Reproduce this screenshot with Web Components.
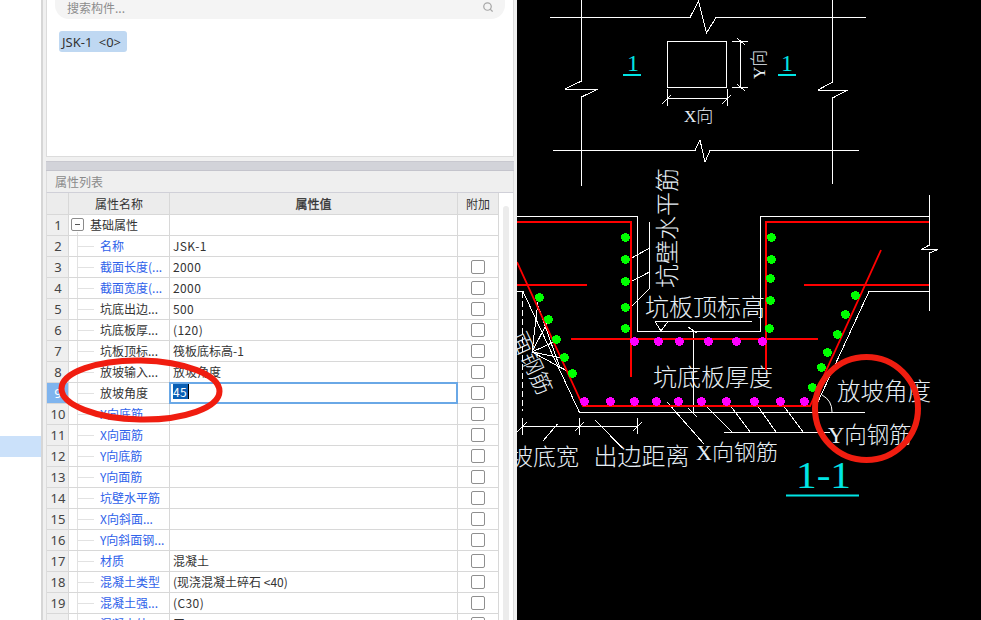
<!DOCTYPE html>
<html lang="zh"><head><meta charset="utf-8"><title>属性列表</title>
<style>
html,body{margin:0;padding:0;background:#fff;height:620px;overflow:hidden}
body{font-family:"Noto Sans CJK SC","Noto Sans",sans-serif}
</style></head><body>
<app-shell>
  <left-gutter slot="gutter"></left-gutter>
  <side-panel slot="panel">
    <search-box slot="search" placeholder="搜索构件..."></search-box>
    <tag-chip slot="tags">JSK-1 &lt;0&gt;</tag-chip>
    <prop-table slot="table"></prop-table>
  </side-panel>
  <cad-drawing slot="canvas"></cad-drawing>
</app-shell>
<script>
function define(name, css, html, extra){
  class E extends HTMLElement{
    constructor(){super();this.attachShadow({mode:'open'}).innerHTML='<style>'+css+'</style>'+html;}
    connectedCallback(){ if(extra) extra.call(this); }
  }
  customElements.define(name,E);
}
define('app-shell',`:host{display:flex;width:981px;height:620px;overflow:hidden}
 .g{flex:0 0 41px}.p{flex:0 0 476px}.c{flex:0 0 464px}`,
 `<div class="g"><slot name="gutter"></slot></div><div class="p"><slot name="panel"></slot></div><div class="c"><slot name="canvas"></slot></div>`);

define('left-gutter',`:host{display:block;height:620px;padding-top:436px;box-sizing:border-box;background:#fff}
 div{height:21px;background:#cbe1fa}`,`<div></div>`);

define('side-panel',`:host{display:flex;flex-direction:column;height:620px;box-sizing:border-box;background:#f0f0f0;
   border-left:2px solid #d6d6d6;padding:0 3px 0 3px}
 .top{height:157px;box-sizing:border-box;background:#fff;border:1px solid #dcdcdc;border-top:0;padding:0 8px;flex:none}
 .tags{display:flex;padding:12px 4px 0}
 .grip{flex:none;height:10px;margin-top:4px;box-sizing:border-box;background:#d2d3d9;border-top:1px solid #c8c8cf;border-bottom:1px solid #c4c4cc}
 .title{flex:none;height:22px;box-sizing:border-box;padding:0 8px 1px;display:flex;align-items:center;font-size:12px;color:#8a8a8a;background:#efefef;border-left:1px solid #dcdcdc;border-right:1px solid #dcdcdc;border-bottom:1px solid #d0d0d8}
 .tbl{flex:1;min-height:0}`,
 `<div class="top"><slot name="search"></slot><div class="tags"><slot name="tags"></slot></div></div>
  <div class="grip"></div><div class="title">属性列表</div><div class="tbl"><slot name="table"></slot></div>`);

define('search-box',`:host{display:flex;align-items:center;justify-content:space-between;height:20px;box-sizing:border-box;margin-top:-1px;padding:0 12px 4px;
   background:#f4f4f4;border-radius:0 0 14px 14px;font-size:12px;color:#8c8c8c}
 svg{width:10px;height:10px;display:block}`,
 `<span id="t"></span><svg viewBox="0 0 12 12" fill="none" stroke="#a8a8a8" stroke-width="1.5"><circle cx="5.4" cy="5.4" r="4.5"/><path d="M8.6 8.6 11.5 11.5"/></svg>`,
 function(){this.shadowRoot.getElementById('t').textContent=this.getAttribute('placeholder');});

define('tag-chip',`:host{display:inline-flex;align-items:center;height:21px;box-sizing:border-box;padding:0 3px;width:68px;white-space:pre;
   background:#bfd8f2;border-radius:3px;font:13px "Noto Sans","Noto Sans CJK SC",sans-serif;color:#333;word-spacing:3px}`,`<slot></slot>`);

define('prop-row',`:host{display:grid;grid-template-columns:22px 101px 288px 41px;height:21px;box-sizing:border-box;font-size:12px;line-height:20px;color:#333}
 div{box-sizing:border-box;border-bottom:1px solid #d8d8d8;border-right:1px solid #d8d8d8;height:21px;overflow:hidden;white-space:nowrap;position:relative}
 .n{background:#efefef;text-align:center;padding-left:1px;color:#444;font-size:13px;font-family:"Noto Sans",sans-serif}
 .name{padding-left:31px;border-right:1px solid #d8d8d8}
 .name::before{content:"";position:absolute;left:8px;top:0;bottom:0;border-left:1px solid #e2e2e2}
 .name::after{content:"";position:absolute;left:9px;top:10px;width:16px;border-top:1px solid #e2e2e2}
 :host([group]) .name{padding-left:21px}
 :host([group]) .name::after{display:none}
 :host([group]) .name::before{top:17px}
 :host([link]) .name{color:#2f62ea}
 .val{padding-left:3px}
 .box{position:absolute;left:2px;top:3px;width:11px;height:11px;border:1px solid #8b8b8b;border-radius:2px;background:#fff;display:none}
 .box::after{content:"";position:absolute;left:3px;top:5px;width:5px;border-top:1px solid #555}
 :host([group]) .box{display:block}
 .add{display:flex;align-items:center;justify-content:center}
 .add i{display:block;width:14px;height:14px;box-sizing:border-box;border:1px solid #8f8f8f;border-radius:2px;background:#fff}
 :host([group]) .add i,:host([noadd]) .add i{display:none}
 :host([selected]) .n{background:#7fb4ee;color:#fff}
 :host([selected]) .val{border:2px solid #6aa8e6;padding:0 0 0 2px;margin:-1px 0 0 -1px;height:22px;line-height:18px;width:calc(100% + 1px)}
 .sel{background:#0a5fb4;color:#fff;padding-right:1px;display:inline-block;line-height:15px;vertical-align:1px;border-right:1px solid #000}`,
 `<div class="n" id="n"></div><div class="name"><span class="box"></span><span id="a"></span></div><div class="val" id="v"></div><div class="add"><i></i></div>`,
 function(){const r=this.shadowRoot;
   r.getElementById('n').textContent=this.getAttribute('n');
   r.getElementById('a').textContent=this.getAttribute('name');
   const v=r.getElementById('v'), val=this.getAttribute('val')||'';
   if(/^[\x00-\x7f]+$/.test(val)) v.style.letterSpacing='.4px';
   if(this.hasAttribute('selected')){const s=document.createElement('span');s.className='sel';s.textContent=val;v.append(s);}
   else v.textContent=val;
 });

define('prop-table',`:host{display:block;position:relative;height:427px;overflow:hidden;background:#fff;box-sizing:border-box;border-left:1px solid #dcdcdc;border-right:1px solid #dcdcdc}
 .head{display:grid;grid-template-columns:22px 101px 288px 41px;height:22px;box-sizing:border-box}
 .head div{box-sizing:border-box;background:#ececec;border-bottom:1px solid #d8d8d8;border-right:1px solid #d8d8d8;text-align:center;font-size:12px;line-height:21px;color:#333}
 .head .v{-webkit-text-stroke:.3px #333}
 .track{position:absolute;left:456px;top:13px;width:6px;bottom:0;background:#ececec;border-radius:3px 3px 0 0}
 .oval{position:absolute;left:11px;top:164px;width:165px;height:66px;pointer-events:none}`,
 `<div class="head"><div></div><div>属性名称</div><div class="v">属性值</div><div>附加</div></div>
  <div id="rows"></div><div class="track"></div>
  <svg class="oval" viewBox="0 0 165 66" fill="none"><ellipse cx="82.5" cy="33" rx="79" ry="29.5" transform="rotate(1 82 33)" stroke="#f01d10" stroke-width="6"/></svg>`,
 function(){
   const rows=[['1','基础属性','',0,'group'],['2','名称','JSK-1',1,'noadd'],['3','截面长度(...','2000',1],['4','截面宽度(...','2000',1],
   ['5','坑底出边...','500',0],['6','坑底板厚...','(120)',0],['7','坑板顶标...','筏板底标高-1',0],['8','放坡输入...','放坡角度',0],['9','放坡角度','45',0,'selected'],
   ['10','X向底筋','',1],['11','X向面筋','',1],['12','Y向底筋','',1],['13','Y向面筋','',1],['14','坑壁水平筋','',1],['15','X向斜面...','',1],['16','Y向斜面钢...','',1],
   ['17','材质','混凝土',1],['18','混凝土类型','(现浇混凝土碎石 <40)',1],['19','混凝土强...','(C30)',1],['20','混凝土外...','无',1]];
   const host=this.shadowRoot.getElementById('rows');
   rows.forEach(r=>{const e=document.createElement('prop-row');
     e.setAttribute('n',r[0]);e.setAttribute('name',r[1]);e.setAttribute('val',r[2]);
     if(r[3])e.setAttribute('link','');if(r[4])e.setAttribute(r[4],'');host.append(e);});
 });

define('cad-drawing',`:host{display:block;width:464px;height:620px;background:#000;overflow:hidden}
 svg{display:block}
 .w{stroke:#fff;stroke-width:1;fill:none;shape-rendering:crispEdges}
 .r{stroke:#f00;stroke-width:2;fill:none;shape-rendering:crispEdges}
 .r2{stroke:#f00;stroke-width:1.8;fill:none}
 .g{fill:#0f0;shape-rendering:crispEdges}.m{fill:#f0f;shape-rendering:crispEdges}
 text{fill:#e6eef5;font-family:"Liberation Serif","Noto Sans CJK SC",serif;font-weight:300}
 .c{fill:#00e5e5;font-family:"Liberation Serif",serif;font-weight:400}`,
 `<svg width="464" height="620" viewBox="517 0 464 620">
  <text x="684" y="122" font-size="17">X向</text>
  <text transform="translate(765 79) rotate(-90)" font-size="17">Y向</text>
  <text class="c" x="627" y="71" font-size="24">1</text><text class="c" x="781" y="71" font-size="24">1</text>
  <path d="M623 75H641M778 75H796" stroke="#00e5e5" stroke-width="2"/>
  <text transform="translate(676 288) rotate(-90)" font-size="24">坑壁水平筋</text>
  <text x="645" y="316" font-size="24">坑板顶标高</text>
  <text x="653" y="386" font-size="24">坑底板厚度</text>
  <text x="837" y="400" font-size="23.5">放坡角度</text>
  <text x="828" y="443" font-size="22.5">Y向钢筋</text>
  <text x="487" y="465" font-size="23">放坡底宽</text>
  <text x="593.5" y="465" font-size="24">出边距离</text>
  <text x="696" y="460" font-size="22">X向钢筋</text>
  <text transform="translate(511 336.5) rotate(65)" font-size="22">面钢筋</text>
  <text class="c" x="796" y="488" font-size="38" textLength="55" lengthAdjust="spacingAndGlyphs">1-1</text>
  <path d="M786 495.5H859" stroke="#00e5e5" stroke-width="2"/>
  <g class="w">
   <path d="M550 17.5H690L698.5 1 706.5 33 716 17.5H866"/>
   <path d="M553 150.5H695L700 140 705 162 710 150.5H859"/>
   <path d="M581.5 0V81L565 89H598L581.5 97V186"/>
   <path d="M832.5 0V82L818 90H848L832.5 98V184"/>
   <rect x="667.5" y="41.5" width="59" height="46"/>
   <path d="M732 41.5H748M732 87.5H748M740.5 41.5V87.5M737 38 745 45M737 84 745 91"/>
   <path d="M667.5 89V106M727.5 89V106M667.5 98.5H727.5M662 104 671 95M722 104 731 95"/>
   <path d="M517 216.5H637.5V331.5H760.5V216.5H929.5"/>
   <path d="M929.5 195V245L921 249.5H938L929.5 253V311"/>
   <path d="M649.5 222V288.5L630 308M649.5 248 630 259M649.5 272 630 282"/>
   <path d="M655 321.5H752M655 321.5 661 331 668 321.5"/>
   <path d="M693.5 332V413M688 327 697 333M688 408 697 417"/>
   <path d="M517 291.5H523L579.5 412.5H865"/>
   <path d="M813 412.5 869 291.5H929"/>
   <path d="M532 352 538 302M532 352 547 323M532 352 554 342M532 352 562 358M532 352 569 372M537 303 560 368"/>
   <path d="M522.5 292V411" stroke-dasharray="6 3"/>
   <path d="M522 426.5H638M522.5 418V435M579.5 418V435M637.5 418V434M517 432 527 422M575 431 584 422M633 431 642 422"/>
   <path d="M557.5 424 543 441M595 420 622.5 448"/>
   <path d="M667 402 704 444M704 404 732 432M730 405 750 432M757 405 776 432M783 405 803 432M724 432.5H830"/>
   <path d="M832 412A19 19 0 0 0 822 395" shape-rendering="auto"/>
  </g>
  <path class="r" d="M517 222H631V377M929 222H766V370M517 285H587M804 285H929M571 339H818"/>
  <path class="r2" d="M517 262 583 406H810L881 250"/>
  <g class="g">
   <circle cx="625.5" cy="237.5" r="4.5"/><circle cx="625.5" cy="259.5" r="4.5"/><circle cx="625.5" cy="281.5" r="4.5"/><circle cx="625.5" cy="307.5" r="4.5"/><circle cx="625.5" cy="328.5" r="4.5"/>
   <circle cx="771.5" cy="237.5" r="4.5"/><circle cx="771.5" cy="259.5" r="4.5"/><circle cx="770.5" cy="278.5" r="4.5"/><circle cx="770.5" cy="300.5" r="4.5"/><circle cx="769.5" cy="328.5" r="4.5"/>
   <circle cx="855.5" cy="295.5" r="4.5"/><circle cx="845.5" cy="314.5" r="4.5"/><circle cx="837.5" cy="334.5" r="4.5"/><circle cx="827.5" cy="352.5" r="4.5"/><circle cx="821.5" cy="367.5" r="4.5"/><circle cx="812.5" cy="387.5" r="4.5"/>
   <circle cx="539.5" cy="297.5" r="4.5"/><circle cx="548.5" cy="319.5" r="4.5"/><circle cx="556.5" cy="339.5" r="4.5"/><circle cx="564.5" cy="357.5" r="4.5"/><circle cx="572.5" cy="373.5" r="4.5"/>
  </g>
  <g class="m">
   <circle cx="634.5" cy="341.5" r="4.5"/><circle cx="658.5" cy="341.5" r="4.5"/><circle cx="679.5" cy="341.5" r="4.5"/><circle cx="708.5" cy="341.5" r="4.5"/><circle cx="736.5" cy="341.5" r="4.5"/><circle cx="762.5" cy="341.5" r="4.5"/>
   <circle cx="584.5" cy="401.5" r="4.5"/><circle cx="610.5" cy="401.5" r="4.5"/><circle cx="634.5" cy="401.5" r="4.5"/><circle cx="656.5" cy="401.5" r="4.5"/><circle cx="678.5" cy="401.5" r="4.5"/><circle cx="701.5" cy="401.5" r="4.5"/><circle cx="726.5" cy="401.5" r="4.5"/><circle cx="754.5" cy="401.5" r="4.5"/><circle cx="780.5" cy="401.5" r="4.5"/><circle cx="804.5" cy="401.5" r="4.5"/>
  </g>
  <circle cx="866.5" cy="408.5" r="51.5" fill="none" stroke="#f01d10" stroke-width="6"/>
 </svg>`);
</script>
</body></html>
